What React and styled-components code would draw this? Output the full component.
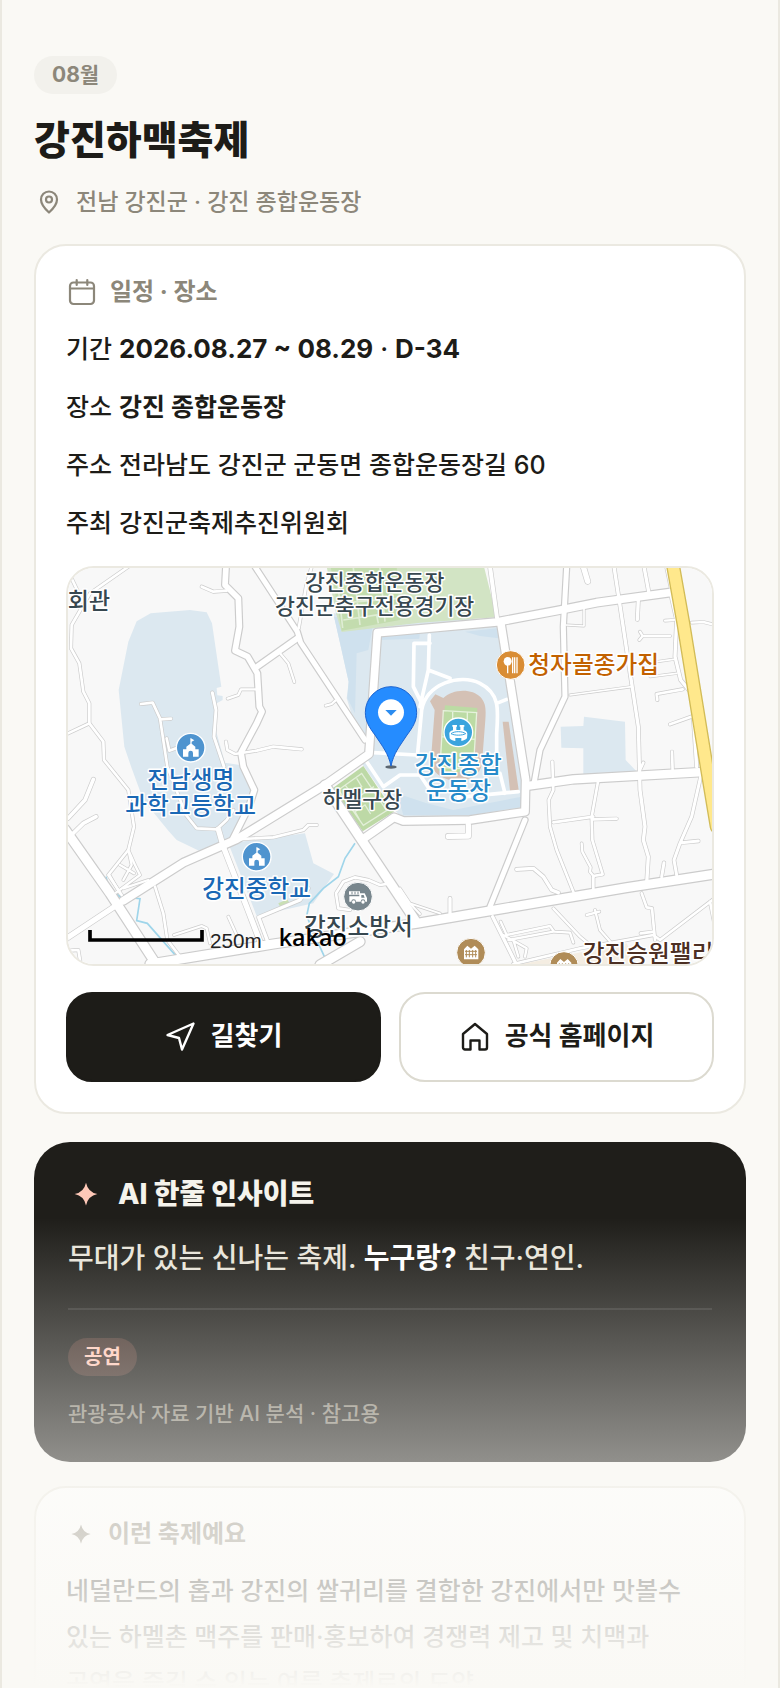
import React from 'react';
import styled, { createGlobalStyle } from 'styled-components';

const GlobalStyle = createGlobalStyle`
  * {
    box-sizing: border-box;
  }

  body {
    margin: 0;
    background: #faf9f5;
    color: #1d1c18;
    font-family: Inter, 'Noto Sans CJK KR', sans-serif;
    font-weight: 500;
  }

  h1, h2, p, dl, dd {
    margin: 0;
  }

  strong {
    font-weight: 700;
  }
`;

const BLUE_AREAS = [
  '230,184 272,160 390,150 440,157 456,190 484,380 470,384 472,406 488,408 488,420 466,432 470,520 495,608 540,615 583,700 560,750 512,842 420,874 350,840 325,812 250,720 215,625 193,560 176,390 205,245',
  '505,850 735,820 760,910 822,942 760,1030 590,1068',
  '820,160 1320,180 1400,745 1240,768 1020,768 1000,745 905,610 920,540 880,480 860,415 866,365 838,240',
  '1502,500 1570,498 1572,470 1695,485 1697,600 1735,640 1570,650 1570,565 1504,563',
];

const STREAMS = [
  'M885,850 L855,895 L835,950 L790,985 L748,1030 L740,1068 L775,1150 L800,1205',
  'M138,950 L148,990 L178,1010 L240,1016 L230,1082 L262,1090 L350,1190',
];

// w is the outer width of the road, kerb included
const ROADS = [
  { w: 12, d: 'M205,20 L90,100 L35,195 L33,265 L58,310 L70,395 L88,430 L88,490 L130,545 L132,600 L205,690 L222,800 L205,870 L145,945 L185,1005' },
  { w: 12, d: 'M20,522 L88,490 M30,45 L62,112' },
  { w: 12, d: 'M425,80 L460,95 L500,92' },
  { w: 11, d: 'M503,416 L535,405 L543,388 L590,388' },
  { w: 11, d: 'M660,280 L685,310 L703,366 M797,437 L815,432 L826,422' },
  { w: 12, d: 'M498,545 L502,570 L525,582 L590,572 L640,560 L725,568' },
  { w: 12, d: 'M243,432 L278,428 L300,475 L322,620 L378,765 L410,805 L470,808 L500,780 L520,750 M300,478 L333,476 M320,535 L328,572 L350,564' },
  { w: 13, d: 'M457,398 L468,450 L462,530 L492,620' },
  { w: 12, d: 'M755,20 L738,80 L716,205' },
  { w: 20, d: 'M475,808 L490,860 L560,1040 L602,1150' },
  { w: 12, d: 'M530,838 L640,832 L730,810 L745,795 L770,795' },
  { w: 15, d: 'M24,775 L75,720 L100,658 M24,835 L70,790 L108,770' },
  { w: 11, d: 'M205,870 L225,915 L240,945 L168,998 M148,945 L180,1000 M180,915 L222,940 M205,870 L215,915 L190,960 M190,985 L265,960' },
  { w: 12, d: 'M285,980 L310,1060 L322,1140 L360,1190' },
  { w: 11, d: 'M342,1125 L425,1098 L440,1105 L450,1150 M505,1070 L530,1125' },
  { w: 14, d: 'M596,1072 L720,1020 L745,985 M596,1072 L622,1142' },
  { w: 12, d: 'M24,1172 L55,1170 L62,1212' },
  { w: 12, d: 'M835,1045 L828,1000 L850,965 L885,952 L925,960 L960,975 L990,970 M835,1045 L870,1050' },
  { w: 16, d: 'M1290,20 L1312,180' },
  { w: 20, d: 'M1570,20 L1583,64' },
  { w: 14, d: 'M1662,20 L1682,150 L1715,370 L1735,500 L1740,690 L1755,800 L1750,840 L1765,890 L1760,970' },
  { w: 14, d: 'M1752,20 L1766,95 M1820,20 L1835,90 M1735,120 L1732,178' },
  { w: 14, d: 'M1832,100 L1850,180 L1845,290 L1862,360 L1895,400 M1900,470 L1910,620' },
  { w: 11, d: 'M1740,215 L1748,228 L1830,228 M1748,228 L1738,240 M1815,182 L1842,180 M1895,188 L1930,186 L1965,195' },
  { w: 9, d: 'M1790,305 L1840,298 M1770,350 L1850,340' },
  { w: 12, d: 'M1792,420 L1790,402 L1868,388 M1830,493 L1900,468 M1836,575 L1838,635 M1750,608 L1740,630' },
  { w: 9, d: 'M1530,405 L1715,380 M1520,195 L1572,198 L1572,145' },
  { w: 12, d: 'M1477,605 L1480,690 L1466,720 L1470,800 L1490,870 L1540,995' },
  { w: 12, d: 'M1480,787 L1600,770 M1614,665 L1595,770 L1597,840 L1628,943 L1600,948 L1600,990 M1600,778 L1670,776' },
  { w: 11, d: 'M1565,850 L1567,875 L1592,922 L1590,935 L1602,950' },
  { w: 13, d: 'M1922,650 L1895,770 L1860,850 L1842,900 L1850,945 M1865,848 L1915,843 M1812,908 L1805,950' },
  { w: 22, d: 'M1395,780 L1290,1040' },
  { w: 20, d: 'M1225,795 L1225,828 L1165,829' },
  { w: 14, d: 'M1370,928 L1420,925 L1450,950 L1475,990 L1495,998 M1170,1015 L1170,1060' },
  { w: 10, d: 'M1020,985 L1050,1030 L1140,1060 M1040,1020 L1080,1062' },
  { w: 14, d: 'M1298,1070 L1370,1215' },
  { w: 11, d: 'M1322,1085 L1340,1125 L1470,1098 L1482,1115 L1530,1118 L1540,1148 M1345,1140 L1480,1115 M1360,1140 L1375,1190 M1330,1125 L1400,1165 L1395,1190' },
  { w: 12, d: 'M1360,1212 L1560,1165 L1700,1140 L1780,1125 L1800,1140 L1960,1018 M1950,1025 L1962,1085' },
  { w: 11, d: 'M1480,1045 L1560,1130 L1590,1155 M1605,1050 L1620,1110 L1655,1150 M1580,1065 L1618,1055' },
  { w: 12, d: 'M1745,1000 L1760,1042 L1776,1045 L1785,1140 M1742,1120 L1782,1115' },
  { w: 24, d: 'M498,20 L495,75 L535,115 L538,200 L525,272 L563,290 L592,340 L598,440 L606,455 L590,490 L543,578 L550,620 L583,690 L567,740 L518,838' },
  { w: 22, d: 'M585,20 L712,215 L722,248 L915,540' },
  { w: 24, d: 'M712,235 L586,324' },
  { w: 22, d: 'M1520,20 L1510,200 L1515,410 L1440,570 L1422,670' },
  { w: 20, d: 'M20,1135 L190,1022' },
  { w: 30, d: 'M190,1022 L370,908 L530,838 L795,675 L927,582 L952,218 L1000,214 L1310,186 L1490,152 L1610,128 L1842,96' },
  { w: 30, d: 'M1322,186 L1345,330 L1397,660 L1395,755 L1230,780 L1030,783 L1002,772 L905,840' },
  { w: 34, d: 'M795,675 L905,840 L1065,1080' },
  { w: 32, d: 'M1400,678 L1540,658 L1930,636' },
  { w: 34, d: 'M270,1212 L640,1152 L1070,1090 L1280,1054 L1700,983 L1965,942 M780,1215 L900,1145' },
  { w: 34, d: 'M15,808 L150,1000 L290,1215' },
];

const FOOTPATHS =
  'M1108,225 L1105,330 L1080,440 M1110,250 L1062,250 L1060,380 L1085,430 M1072,590 L1085,450 C1100,370 1200,340 1260,370 C1320,400 1315,450 1310,520 L1310,640 M1105,330 L1170,355 M1310,430 L1340,418 M940,578 L1070,585 M920,605 L970,680 L1020,645 L1080,645 L1110,690 L1130,705 M1195,712 L1375,695 M1320,640 L1335,700';

const LABELS = [
  { x: 87, y: 146, size: 69, color: '#37474f', text: '회관' },
  { x: 944, y: 90, size: 65, color: '#37474f', text: '강진종합운동장' },
  { x: 944, y: 163, size: 65, color: '#37474f', text: '강진군축구전용경기장' },
  { x: 1601, y: 340, size: 71, color: '#c26100', text: '청자골종가집' },
  { x: 392, y: 683, size: 71, color: '#1a68b5', text: '전남생명' },
  { x: 392, y: 761, size: 71, color: '#1a68b5', text: '과학고등학교' },
  { x: 590, y: 1010, size: 71, color: '#1a68b5', text: '강진중학교' },
  { x: 1195, y: 638, size: 71, color: '#278bca', text: '강진종합' },
  { x: 1195, y: 717, size: 71, color: '#278bca', text: '운동장' },
  { x: 907, y: 742, size: 65, color: '#37474f', text: '하멜구장' },
  { x: 895, y: 1126, size: 71, color: '#37474f', text: '강진소방서' },
  { x: 1797, y: 1206, size: 71, color: '#4c2f23', text: '강진승원팰리스' },
];

const SchoolPoi = ({ x, y }) => (
  <g transform={`translate(${x} ${y})`}>
    <circle r="43" fill="#4f94cf" stroke="#fff" strokeWidth="4" />
    <path
      fill="#fff"
      d="M1,-28 L11,-22 L3,-18 V-12 L14,-3 V5 H24 V27 H7 V16 a7,7 0 0 0 -14,0 V27 H-23 V5 H-13 V-3 L-1,-12 V-28 Z"
    />
  </g>
);

const BuildingPoi = ({ x, y }) => (
  <g transform={`translate(${x} ${y})`}>
    <circle r="43" fill="#b08c58" stroke="#fff" strokeWidth="3" />
    <path fill="#fff" d="M-21,20 V-10 L-11,-21 L0,-12 L11,-21 L22,-10 V20 Z" />
    <path stroke="#b08c58" strokeWidth="3" d="M-14,-8 V14 M-5,-8 V14 M5,-8 V14 M14,-8 V14 M-18,-4 H18 M-18,6 H18" />
  </g>
);

const VenueMap = () => (
  <MapBox>
    <svg viewBox="24 24 1932 1188" preserveAspectRatio="xMidYMid slice" role="img" aria-label="강진 종합운동장 지도">
      <rect x="0" y="0" width="2000" height="1240" fill="#f8f8f8" />
      <g fill="#dce8f0">
        {BLUE_AREAS.map((points) => (
          <polygon key={points} points={points} />
        ))}
      </g>
      <g fill="#cfe1ee">
        <polygon points="822,170 940,190 925,270 890,280 885,460 862,415 866,365 838,240" />
        <polygon points="960,225 1080,212 1078,236 960,240" />
        <polygon points="1215,215 1310,205 1316,235 1260,228" />
        <polygon points="1010,700 1100,730 1180,750 1385,710 1388,740 1240,765 1030,765" />
      </g>
      <polygon points="1370,1215 1570,1175 1700,1150 1730,1215" fill="#f4ede2" />

      <polygon points="800,20 1272,20 1310,172 1080,188 845,216 828,160" fill="#d2e4c4" />
      <polygon points="812,20 1010,20 1020,180 845,212" fill="#c3dcae" />
      <path
        d="M830,40 L848,204 M880,24 L900,195 M960,24 L975,185 M815,70 L1010,55 M830,130 L1015,115 M850,180 L950,165 L955,190"
        fill="none"
        stroke="#dfedd4"
        strokeWidth="5"
      />
      <polygon points="818,685 910,618 1002,755 908,814" fill="#bdd9a6" />
      <path
        d="M835,690 L905,640 L980,752 L910,796 Z M868,728 L942,680 M856,676 L875,700 L905,680 L890,655 M898,778 L885,755 L915,735 L932,762"
        fill="none"
        stroke="#e3efd9"
        strokeWidth="4"
      />
      <polygon points="655,1030 682,1018 690,1032 662,1044" fill="#c9dfb5" />

      <path d="M1110,424 L1126,403 L1150,414 C1175,388 1235,382 1262,412 C1278,430 1278,450 1276,480 L1266,610 C1258,680 1130,680 1112,610 L1124,450 Z" fill="#d4c1b5" />
      <polygon points="1328,485 1346,485 1376,690 1350,692" fill="#d4c1b5" />
      <polygon points="1155,436 1252,444 1240,640 1135,632" fill="#bcdba4" />
      <path d="M1150,452 L1250,458 L1240,628 L1140,622 Z M1145,530 L1246,538 M1178,454 V478 L1222,480 V456" fill="none" stroke="#e6f2dc" strokeWidth="4" />

      <g fill="none" stroke="#9fd5ea" strokeWidth="5">
        {STREAMS.map((d) => (
          <path key={d} d={d} />
        ))}
      </g>
      <path d="M168,1002 L192,1004 L185,1018 Z" fill="#9fd5ea" />

      <g fill="none" strokeLinecap="round" strokeLinejoin="round">
        <path d={FOOTPATHS} stroke="#fff" strokeWidth="11" />
        {ROADS.map((road) => (
          <path key={road.d} d={road.d} stroke="#cccccc" strokeWidth={road.w} />
        ))}
        {ROADS.map((road) => (
          <path key={road.d} d={road.d} stroke="#fff" strokeWidth={road.w > 20 ? road.w - 7 : road.w - 4} />
        ))}
        <path d="M1838,10 L1870,190 L1940,620 L1970,800" stroke="#d2bc58" strokeWidth="42" />
        <path d="M1838,10 L1870,190 L1940,620 L1970,800" stroke="#ffe88c" strokeWidth="34" />
      </g>

      <SchoolPoi x={392} y={563} />
      <SchoolPoi x={590} y={890} />
      <BuildingPoi x={1233} y={1178} />
      <BuildingPoi x={1512} y={1218} />

      <g transform="translate(1352 315)">
        <circle r="43" fill="#d98d35" stroke="#fff" strokeWidth="3" />
        <ellipse cx="-9" cy="-11" rx="12" ry="13" fill="#fff" />
        <path d="M-9,-5 V25 M6,-23 V25 M12,-23 V25 M19,-23 V25" stroke="#fff" strokeWidth="4" />
      </g>

      <g transform="translate(1195 517)">
        <circle r="43" fill="#3aa4de" stroke="#fff" strokeWidth="4" />
        <path
          fill="#fff"
          d="M-18,-22 H-4 V-17 H-6 V-7 H6 V-17 H4 V-22 H18 V-17 H16 V-6 C26,-4 27,2 27,6 L26,18 C20,24 12,26 9,26 V17 H-9 V26 C-14,26 -22,24 -26,18 L-27,6 C-27,2 -26,-4 -16,-6 V-17 H-18 Z"
        />
        <path d="M-22,4 C-12,-4 12,-4 22,4 C12,10 -12,10 -22,4 Z" fill="none" stroke="#3aa4de" strokeWidth="3" />
      </g>

      <g transform="translate(894 1010)">
        <circle r="43" fill="#78868d" stroke="#fff" strokeWidth="3" />
        <path fill="#fff" d="M-26,-1 H4 V-10 H20 L27,4 V15 H22 a7,7 0 0 0 -14,0 H-6 a7,7 0 0 0 -14,0 H-26 Z M-27,-16 H6 V-6 H-27 Z" />
        <circle cx="-13" cy="16" r="5" fill="#fff" />
        <circle cx="15" cy="16" r="5" fill="#fff" />
        <path d="M-18,-15 V-7 M-9,-15 V-7 M0,-15 V-7" stroke="#78868d" strokeWidth="3" />
        <path d="M10,-5 H17 L20,3 H10 Z" fill="#78868d" />
      </g>

      {LABELS.map((label) => (
        <MapLabel key={label.text + label.y} x={label.x} y={label.y} fill={label.color} fontSize={label.size}>
          {label.text}
        </MapLabel>
      ))}

      <ellipse cx="993" cy="621" rx="17" ry="5" fill="#5b6670" />
      <path
        d="M993,618 C985,580 968,560 945,525 C926,500 916,482 916,457 A77,77 0 1 1 1070,457 C1070,482 1060,500 1041,525 C1018,560 1001,580 993,618 Z"
        fill="#258cff"
        stroke="#1c64d0"
        strokeWidth="3"
      />
      <circle cx="993" cy="457" r="39" fill="#fff" />
      <path d="M976,450 H1010 L993,467 Z" fill="#2b8cf0" />

      <path d="M90,1110 V1140 H426 V1110" fill="none" stroke="#000" strokeWidth="11" />
      <text x="450" y="1163" fontFamily="'Liberation Sans', sans-serif" fontWeight="400" fontSize="62" fill="#222">
        250m
      </text>
      <text x="656" y="1157" fontFamily="'Open Sans', sans-serif" fontWeight="600" fontSize="70" fill="#000">
        kakao
      </text>
    </svg>
  </MapBox>
);

const Spark = () => (
  <svg viewBox="0 0 24 24" fill="currentColor" aria-hidden="true">
    <path d="M12 1.500 Q13.800 10.200 22.500 12 Q13.800 13.800 12 22.500 Q10.200 13.800 1.500 12 Q10.200 10.200 12 1.500 Z" />
  </svg>
);

const App = () => {
  return (
    <Page>
      <GlobalStyle />
      <Header>
        <MonthBadge>08월</MonthBadge>
        <Title>강진하맥축제</Title>
        <Place>
          <Icon $size={30}>
            <svg viewBox="0 0 30 30" fill="none" stroke="currentColor" strokeWidth="2.2" strokeLinejoin="round">
              <path d="M15 25.500 C10 21 7 17 7 12.500 A8 8 0 0 1 23 12.500 C23 17 20 21 15 25.500 Z" />
              <circle cx="15" cy="12.500" r="3" />
            </svg>
          </Icon>
          전남 강진군 · 강진 종합운동장
        </Place>
      </Header>

      <Card>
        <CardTitle>
          <Icon $size={32}>
            <svg viewBox="0 0 32 32" fill="none" stroke="currentColor" strokeWidth="2.2" strokeLinecap="round">
              <rect x="4" y="6.500" width="24" height="21.500" rx="3.500" />
              <path d="M4 12.500 H28 M10.700 4 V9 M21.300 4 V9" />
            </svg>
          </Icon>
          일정 · 장소
        </CardTitle>
        <InfoList>
          <InfoRow>
            <dt>기간</dt>
            <DateValue><strong>2026.08.27 ~ 08.29</strong> · <strong>D-34</strong></DateValue>
          </InfoRow>
          <InfoRow>
            <dt>장소</dt>
            <dd><strong>강진 종합운동장</strong></dd>
          </InfoRow>
          <InfoRow>
            <dt>주소</dt>
            <dd>전라남도 강진군 군동면 종합운동장길 60</dd>
          </InfoRow>
          <InfoRow>
            <dt>주최</dt>
            <dd>강진군축제추진위원회</dd>
          </InfoRow>
        </InfoList>
        <VenueMap />
        <Actions>
          <ActionButton type="button" $primary>
            <Icon $size={32}>
              <svg viewBox="0 0 32 32" fill="none" stroke="currentColor" strokeWidth="2.4" strokeLinejoin="round">
                <path d="M28.500 3.500 L2.500 15 L14 18 L17 29.500 Z" />
              </svg>
            </Icon>
            길찾기
          </ActionButton>
          <ActionButton type="button">
            <Icon $size={32}>
              <svg viewBox="0 0 32 32" fill="none" stroke="currentColor" strokeWidth="2.4" strokeLinejoin="round">
                <path d="M4 14 L16 4 L28 14 V27.500 a2 2 0 0 1 -2 2 H20.500 V20.500 H11.500 V29.500 H6 a2 2 0 0 1 -2 -2 Z" />
              </svg>
            </Icon>
            공식 홈페이지
          </ActionButton>
        </Actions>
      </Card>

      <InsightCard>
        <InsightTitle>
          <Icon $size={36} $inset={5}>
            <Spark />
          </Icon>
          AI 한줄 인사이트
        </InsightTitle>
        <InsightText>
          무대가 있는 신나는 축제. <strong>누구랑?</strong> 친구·연인.
        </InsightText>
        <Divider />
        <Tag>공연</Tag>
        <Source>관광공사 자료 기반 AI 분석 · 참고용</Source>
      </InsightCard>

      <Card>
        <CardTitle>
          <Icon $size={30} $inset={4}>
            <Spark />
          </Icon>
          이런 축제예요
        </CardTitle>
        <Description>
          네덜란드의 홉과 강진의 쌀귀리를 결합한 강진에서만 맛볼수 있는 하멜촌 맥주를 판매·홍보하여 경쟁력 제고 및
          치맥과 공연을 즐길 수 있는 여름 축제로의 도약
        </Description>
      </Card>
      <Fade />
    </Page>
  );
};

const Page = styled.main`
  position: relative;
  height: 100vh;
  overflow: hidden;
  padding: 56px 32px 0;
  border-left: 2px solid #ebe9e1;
  border-right: 2px solid #ebe9e1;
  background: #faf9f5;
`;

const Header = styled.header`
  display: flex;
  flex-direction: column;
  align-items: flex-start;
  gap: 22px;
  margin-bottom: 26px;
`;

const MonthBadge = styled.span`
  padding: 0 18px;
  border-radius: 19px;
  background: #f2f1ec;
  color: #8c877a;
  font-size: 21px;
  font-weight: 700;
  line-height: 38px;
`;

const Title = styled.h1`
  font-size: 39px;
  font-weight: 800;
  line-height: 48px;
`;

const Place = styled.p`
  display: flex;
  align-items: center;
  gap: 12px;
  color: #8c877a;
  font-size: 23px;
  line-height: 32px;
`;

const Icon = styled.span`
  display: flex;
  flex: none;
  width: ${(props) => props.$size}px;
  height: ${(props) => props.$size}px;
  padding: ${(props) => props.$inset || 0}px;

  svg {
    width: 100%;
    height: 100%;
  }
`;

const Card = styled.section`
  margin-bottom: 28px;
  padding: 30px;
  border: 2px solid #ebe9e1;
  border-radius: 32px;
  background: #fff;
`;

const CardTitle = styled.h2`
  display: flex;
  align-items: center;
  gap: 12px;
  margin-bottom: 18px;
  color: #8c877a;
  font-size: 24px;
  font-weight: 700;
  line-height: 32px;
`;

const InfoList = styled.dl`
  display: flex;
  flex-direction: column;
  gap: 12px;
  margin-bottom: 20px;
`;

const InfoRow = styled.div`
  display: flex;
  align-items: baseline;
  gap: 7px;
  height: 46px;
  font-size: 25px;
  line-height: 46px;
`;

const DateValue = styled.dd`
  font-size: 26px;
`;

const MapBox = styled.div`
  height: 400px;
  margin-bottom: 26px;
  overflow: hidden;
  border: 2px solid #ebe9e1;
  border-radius: 28px;

  svg {
    display: block;
    width: 100%;
    height: 100%;
  }
`;

const MapLabel = styled.text`
  font-family: 'Noto Sans CJK KR', sans-serif;
  font-weight: 500;
  text-anchor: middle;
  stroke: #fff;
  stroke-width: 9px;
  stroke-linejoin: round;
  paint-order: stroke;
`;

const Actions = styled.div`
  display: grid;
  grid-template-columns: 1fr 1fr;
  gap: 18px;
`;

const ActionButton = styled.button`
  display: flex;
  justify-content: center;
  align-items: center;
  gap: 14px;
  height: 90px;
  padding: 0 0 2px;
  border: 2px solid ${(props) => (props.$primary ? '#1d1c18' : '#dcdad0')};
  border-radius: 26px;
  background: ${(props) => (props.$primary ? '#1d1c18' : '#fff')};
  color: ${(props) => (props.$primary ? '#fff' : '#1d1c18')};
  font-family: inherit;
  font-size: 26px;
  font-weight: 700;
  line-height: 32px;
  cursor: pointer;
`;

const InsightCard = styled.section`
  margin-bottom: 24px;
  padding: 34px;
  border-radius: 36px;
  background: #1f1e1a;
`;

const InsightTitle = styled.h2`
  display: flex;
  align-items: center;
  gap: 14px;
  margin-bottom: 22px;
  color: #f5f3ec;
  font-size: 28px;
  font-weight: 800;
  line-height: 36px;

  svg {
    color: #ffc9b8;
  }
`;

const InsightText = styled.p`
  color: #e8e4d9;
  font-size: 28px;
  line-height: 48px;

  strong {
    color: #fff;
  }
`;

const Divider = styled.hr`
  height: 2px;
  margin: 26px 0 28px;
  border: 0;
  background: rgba(255, 255, 255, 0.1);
`;

const Tag = styled.span`
  display: block;
  width: fit-content;
  margin-bottom: 24px;
  padding: 0 16px;
  border-radius: 19px;
  background: rgba(255, 150, 130, 0.16);
  color: #ffc9b8;
  font-size: 20px;
  font-weight: 700;
  line-height: 38px;
`;

const Source = styled.p`
  color: #8c877a;
  font-size: 21px;
  line-height: 28px;
`;

const Description = styled.p`
  font-size: 25px;
  line-height: 46px;
  word-break: keep-all;
`;

const Fade = styled.div`
  position: absolute;
  left: 0;
  right: 0;
  bottom: 0;
  height: 470px;
  background: linear-gradient(rgba(250, 249, 245, 0), #faf9f5);
  pointer-events: none;
`;

export default App;
